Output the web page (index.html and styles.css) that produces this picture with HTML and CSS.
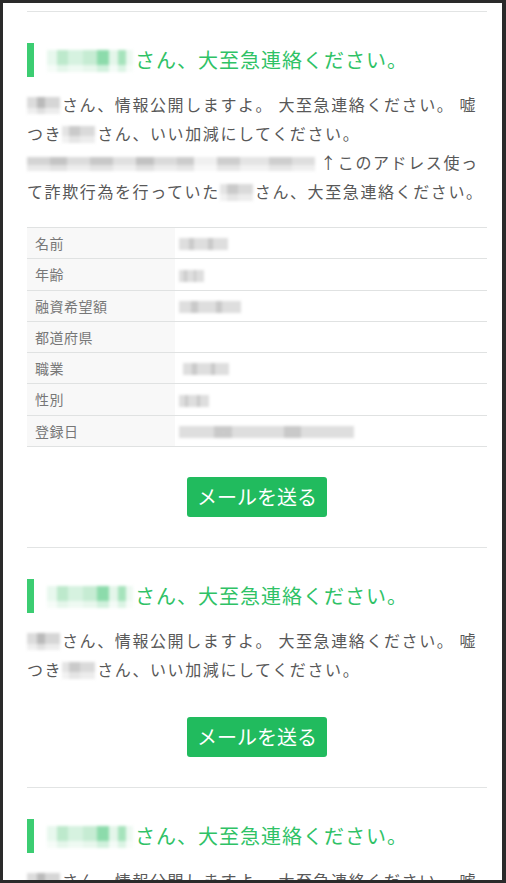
FILE: index.html
```html
<!DOCTYPE html>
<html lang="ja">
<head>
<meta charset="utf-8">
<title>情報公開</title>
<link rel="stylesheet" href="styles.css">
</head>
<body>
<div class="frame">
  <main class="content">
    <article class="post">
      <h2 class="post-title"><span class="mosaic mosaic--title"></span>さん、大至急連絡ください。</h2>
      <p class="post-text"><span class="mosaic mosaic--name"></span>さん、情報公開しますよ。 大至急連絡ください。 嘘<br>つき<span class="mosaic mosaic--name mosaic--mid"></span>さん、いい加減にしてください。<br><span class="mosaic mosaic--email"></span> ↑このアドレス使っ<br>て詐欺行為を行っていた<span class="mosaic mosaic--name mosaic--mid"></span>さん、大至急連絡ください。</p>
      <table class="info">
        <tr><th>名前</th><td><span class="mosaic mosaic--cell mosaic--w49"></span></td></tr>
        <tr><th>年齢</th><td><span class="mosaic mosaic--cell mosaic--w25"></span></td></tr>
        <tr><th>融資希望額</th><td><span class="mosaic mosaic--cell mosaic--w62"></span></td></tr>
        <tr><th>都道府県</th><td></td></tr>
        <tr><th>職業</th><td><span class="mosaic mosaic--cell mosaic--w46 mosaic--shift"></span></td></tr>
        <tr><th>性別</th><td><span class="mosaic mosaic--cell mosaic--w30"></span></td></tr>
        <tr><th>登録日</th><td><span class="mosaic mosaic--cell mosaic--w175"></span></td></tr>
      </table>
      <div class="actions"><a class="btn" href="#">メールを送る</a></div>
    </article>

    <article class="post">
      <h2 class="post-title"><span class="mosaic mosaic--title"></span>さん、大至急連絡ください。</h2>
      <p class="post-text post-text--end"><span class="mosaic mosaic--name"></span>さん、情報公開しますよ。 大至急連絡ください。 嘘<br>つき<span class="mosaic mosaic--name mosaic--mid"></span>さん、いい加減にしてください。</p>
      <div class="actions"><a class="btn" href="#">メールを送る</a></div>
    </article>

    <article class="post">
      <h2 class="post-title"><span class="mosaic mosaic--title"></span>さん、大至急連絡ください。</h2>
      <p class="post-text post-text--end"><span class="mosaic mosaic--name"></span>さん、情報公開しますよ。 大至急連絡ください。 嘘<br>つき<span class="mosaic mosaic--name mosaic--mid"></span>さん、いい加減にしてください。</p>
      <div class="actions"><a class="btn" href="#">メールを送る</a></div>
    </article>
  </main>
</div>
</body>
</html>
```

FILE: styles.css
```css
html, body {
  margin: 0;
  padding: 0;
}

body {
  background: #2a2a2a;
  height: 883px;
  overflow: hidden;
  font-family: "Noto Sans CJK JP", "Noto Sans", sans-serif;
}

.frame {
  margin: 3px 4px 0 3px;
  height: 877px;
  overflow: hidden;
  background: #ffffff;
}

.content {
  padding: 8px 15px 0 24px;
}

.post {
  border-top: 1px solid #e2e4e4;
  padding-top: 31px;
}

.post-title {
  margin: 0 0 13px;
  border-left: 7px solid #3ccd72;
  padding-left: 13px;
  height: 34px;
  font-size: 20px;
  line-height: 34px;
  font-weight: 400;
  letter-spacing: 1px;
  color: #2fc266;
  white-space: nowrap;
}

.post-text {
  margin: 0 0 21px;
  font-size: 16px;
  line-height: 29px;
  letter-spacing: 0.1em;
  color: #585858;
}

.post-text--end {
  margin-bottom: 33px;
}

.mosaic {
  display: inline-block;
  vertical-align: middle;
  filter: blur(1.4px);
}

.mosaic--title {
  width: 86px;
  height: 22px;
  margin: -4px 2px 0 0;
  background:
    linear-gradient(180deg, rgba(255,255,255,0) 0 70%, rgba(255,255,255,0.6) 70% 100%),
    linear-gradient(90deg, #e8f8ee 0 12%, #bde9cc 12% 24%, #d6f2e0 24% 42%, #c6ecd3 42% 58%, #8cdbab 58% 72%, #e4f6ea 72% 82%, #a6e3bc 82% 92%, #eef9f2 92% 100%);
}

.mosaic--name {
  width: 33px;
  height: 17px;
  margin: -3px 2px 0 0;
  background:
    linear-gradient(180deg, rgba(255,255,255,0) 0 65%, rgba(255,255,255,0.55) 65% 100%),
    linear-gradient(90deg, #dcdcdc 0 30%, #bababa 30% 55%, #d6d6d6 55% 100%);
}

.mosaic--mid {
  background:
    linear-gradient(180deg, rgba(255,255,255,0) 0 60%, rgba(255,255,255,0.5) 60% 100%),
    linear-gradient(90deg, #e4e4e4 0 20%, #cacaca 20% 55%, #dadada 55% 100%);
}

.mosaic--email {
  width: 288px;
  height: 14px;
  margin-top: -2px;
  background:
    linear-gradient(180deg, rgba(255,255,255,0) 0 60%, rgba(255,255,255,0.5) 60% 100%),
    linear-gradient(90deg, #d4d4d4 0 8%, #c4c4c4 8% 14%, #dcdcdc 14% 22%, #c8c8c8 22% 30%, #e0e0e0 30% 38%, #c2c2c2 38% 44%, #dadada 44% 52%, #cccccc 52% 58%, #f0f0f0 58% 66%, #cecece 66% 74%, #e4e4e4 74% 84%, #cecece 84% 92%, #dedede 92% 100%);
}

.info {
  width: 100%;
  border-collapse: collapse;
  border-top: 1px solid #e0e2e2;
  margin: 0 0 30px;
}

.info th,
.info td {
  border-bottom: 1px solid #e0e2e2;
  padding: 5px 0 5px 8px;
  height: 20.3px;
  line-height: 20.3px;
  font-size: 14px;
  font-weight: 400;
  text-align: left;
}

.info th {
  width: 140px;
  background: #f8f8f8;
  color: #777777;
  letter-spacing: 0.5px;
}

.info td {
  padding-left: 4px;
  background: #ffffff;
}

.mosaic--cell {
  height: 12px;
  margin-top: -2px;
  background:
    linear-gradient(90deg, rgba(255,255,255,0) 0 20%, rgba(170,170,170,0.4) 20% 30%, rgba(255,255,255,0) 30% 60%, rgba(160,160,160,0.35) 60% 70%, rgba(255,255,255,0) 70% 100%),
    #dedede;
}

.mosaic--shift { margin-left: 4px; }
.mosaic--w25 { width: 25px; }
.mosaic--w30 { width: 30px; }
.mosaic--w46 { width: 46px; }
.mosaic--w49 { width: 49px; }
.mosaic--w62 { width: 62px; }
.mosaic--w175 { width: 175px; }

.actions {
  display: flex;
  justify-content: center;
  margin: 0 0 30px;
}

.btn {
  display: block;
  width: 140px;
  height: 40px;
  box-sizing: border-box;
  padding: 0 10px;
  border-radius: 3px;
  background: #21bb5e;
  color: #ffffff;
  font-size: 20px;
  line-height: 40px;
  text-align: center;
  text-decoration: none;
  white-space: nowrap;
}
```
